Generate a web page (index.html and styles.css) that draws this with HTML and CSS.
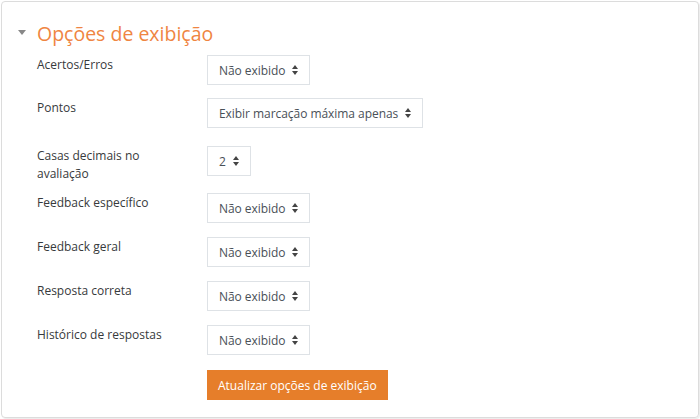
FILE: index.html
```html
<!DOCTYPE html>
<html lang="pt-BR">
<head>
    <meta charset="UTF-8">
    <title>Opções de exibição</title>
    <link rel="stylesheet" href="styles.css">
</head>
<body>
    <div class="card">
        <fieldset class="options">
            <legend><span class="caret"></span>Opções de exibição</legend>

            <div class="form-row tight">
                <label>Acertos/Erros</label>
                <div class="fake-select">Não exibido<span class="arrows"></span></div>
            </div>
            <div class="form-row loose">
                <label>Pontos</label>
                <div class="fake-select">Exibir marcação máxima apenas<span class="arrows"></span></div>
            </div>
            <div class="form-row two-lines">
                <label>Casas decimais no avaliação</label>
                <div class="fake-select">2<span class="arrows"></span></div>
            </div>
            <div class="form-row">
                <label>Feedback específico</label>
                <div class="fake-select">Não exibido<span class="arrows"></span></div>
            </div>
            <div class="form-row">
                <label>Feedback geral</label>
                <div class="fake-select">Não exibido<span class="arrows"></span></div>
            </div>
            <div class="form-row">
                <label>Resposta correta</label>
                <div class="fake-select">Não exibido<span class="arrows"></span></div>
            </div>
            <div class="form-row last">
                <label>Histórico de respostas</label>
                <div class="fake-select">Não exibido<span class="arrows"></span></div>
            </div>
            <div class="form-row">
                <span></span>
                <button class="update-button">Atualizar opções de exibição</button>
            </div>
        </fieldset>
    </div>
</body>
</html>
```

FILE: styles.css
```css
body {
    font-family: "Open Sans", Arial, sans-serif;
    margin: 0;
    padding: 1px;
    background-color: #fff;
    color: #373a3c;
    font-size: 12px;
}
.card {
    border: 1px solid #dcdcdc;
    border-radius: 4px;
    box-shadow: 1px 1px 1px rgba(0, 0, 0, 0.08);
    box-sizing: border-box;
    height: 417px;
    width: 698px;
}
.options {
    border: none;
    margin: 0;
    padding: 17px 0 0 35px;
}
legend {
    color: #ef8542;
    font-size: 19.5px;
    padding: 0;
    float: left;
    width: 100%;
    display: flex;
    align-items: center;
    margin-left: -19px;
    margin-top: -2px;
    margin-bottom: 4px;
    line-height: 34px;
}
.caret {
    width: 0;
    height: 0;
    border-left: 4px solid transparent;
    border-right: 4px solid transparent;
    border-top: 5px solid #888;
    margin-right: 11px;
    margin-top: -3px;
}
.form-row {
    clear: both;
    display: grid;
    grid-template-columns: 170px auto;
    align-items: start;
    margin-bottom: 14px;
}
.form-row.tight {
    margin-bottom: 13px;
}
.form-row.loose {
    margin-bottom: 18px;
}
.form-row.two-lines {
    margin-bottom: 10px;
}
.form-row.last {
    margin-bottom: 15px;
}
.form-row label {
    width: 135px;
    line-height: 18px;
    padding-top: 1px;
}
.fake-select {
    justify-self: start;
    display: flex;
    align-items: center;
    height: 30px;
    box-sizing: border-box;
    border: 1px solid #dee2e6;
    padding: 0 11px;
    color: #495057;
    font-size: 12px;
    letter-spacing: -0.05px;
}
.arrows {
    display: inline-block;
    margin-left: 7px;
    width: 0;
    height: 0;
    border-left: 3px solid transparent;
    border-right: 3px solid transparent;
    border-bottom: 4px solid #444;
    position: relative;
    top: -3px;
}
.arrows::after {
    content: "";
    position: absolute;
    left: -3px;
    top: 6px;
    border-left: 3px solid transparent;
    border-right: 3px solid transparent;
    border-top: 4px solid #444;
}
.update-button {
    justify-self: start;
    background-color: #e67e2a;
    color: white;
    border: none;
    height: 30px;
    padding: 0 11px;
    font-family: inherit;
    font-size: 12px;
}
```
